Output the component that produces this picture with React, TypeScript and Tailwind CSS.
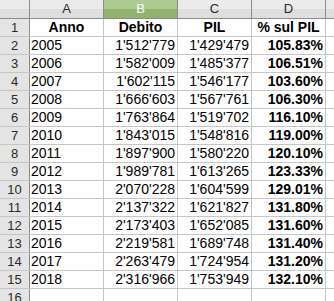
const rows = [
  ["2005", "1'512'779", "1'429'479", "105.83%"],
  ["2006", "1'582'009", "1'485'377", "106.51%"],
  ["2007", "1'602'115", "1'546'177", "103.60%"],
  ["2008", "1'666'603", "1'567'761", "106.30%"],
  ["2009", "1'763'864", "1'519'702", "116.10%"],
  ["2010", "1'843'015", "1'548'816", "119.00%"],
  ["2011", "1'897'900", "1'580'220", "120.10%"],
  ["2012", "1'989'781", "1'613'265", "123.33%"],
  ["2013", "2'070'228", "1'604'599", "129.01%"],
  ["2014", "2'137'322", "1'621'827", "131.80%"],
  ["2015", "2'173'403", "1'652'085", "131.60%"],
  ["2016", "2'219'581", "1'689'748", "131.40%"],
  ["2017", "2'263'479", "1'724'954", "131.20%"],
  ["2018", "2'316'966", "1'753'949", "132.10%"],
];

const cols = ["A", "B", "C", "D"];

function RowHead({ n }: { n: number }) {
  return (
    <div className="flex w-[30px] shrink-0 items-center justify-center border-r border-r-[#8c8c8c] bg-[#e4e4e4] text-[13px] text-[#2a2a2a]">
      {n}
    </div>
  );
}

export default function App() {
  return (
    <div className="h-[301px] w-[334px] overflow-hidden bg-white font-['Liberation_Sans',Arial,sans-serif] text-black">
      {/* column headers */}
      <div className="flex h-[19px] border-b border-[#8c8c8c]">
        <div className="w-[30px] shrink-0 border-r border-[#8c8c8c] bg-[linear-gradient(#ebebeb_50%,#dedede_50%)]" />
        {cols.map((c) => (
          <div
            key={c}
            className={
              c === "B"
                ? "flex w-[74px] shrink-0 items-center justify-center border-r border-[#8c8c8c] bg-[linear-gradient(#acc992_50%,#92b36f_50%)] text-[13px] text-white"
                : "flex w-[74px] shrink-0 items-center justify-center border-r border-[#8c8c8c] bg-[linear-gradient(#ebebeb_50%,#dedede_50%)] text-[13px] text-[#2a2a2a]"
            }
          >
            {c}
          </div>
        ))}
        <div className="flex-1 bg-[linear-gradient(#ebebeb_50%,#dedede_50%)]" />
      </div>

      {/* title row */}
      <div className="flex h-[18px] border-b border-[#c6c6c6]">
        <RowHead n={1} />
        <div className="flex w-[74px] shrink-0 items-center justify-center border-r border-[#c6c6c6] text-[14px] font-bold">Anno</div>
        <div className="flex w-[74px] shrink-0 items-center justify-center border-r border-[#c6c6c6] text-[14px] font-bold">Debito</div>
        <div className="flex w-[74px] shrink-0 items-center justify-center border-r border-[#c6c6c6] text-[14px] font-bold">PIL</div>
        <div className="flex w-[74px] shrink-0 items-center justify-center border-r border-[#c6c6c6] text-[14px] font-bold">% sul PIL</div>
        <div className="flex-1" />
      </div>

      {rows.map((r, i) => (
        <div key={r[0]} className="flex h-[18px] border-b border-[#c6c6c6]">
          <RowHead n={i + 2} />
          <div className="flex w-[74px] shrink-0 items-center border-r border-[#c6c6c6] pl-[1px] text-[14px]">{r[0]}</div>
          <div className="flex w-[74px] shrink-0 items-center justify-end border-r border-[#c6c6c6] pr-[2px] text-[14px]">{r[1]}</div>
          <div className="flex w-[74px] shrink-0 items-center justify-end border-r border-[#c6c6c6] pr-[2px] text-[14px]">{r[2]}</div>
          <div className="flex w-[74px] shrink-0 items-center justify-end border-r border-[#c6c6c6] pr-[2px] text-[14px] font-bold">{r[3]}</div>
          <div className="flex-1" />
        </div>
      ))}

      <div className="flex h-[18px] border-b border-[#c6c6c6]">
        <RowHead n={16} />
        <div className="w-[74px] shrink-0 border-r border-[#c6c6c6]" />
        <div className="w-[74px] shrink-0 border-r border-[#c6c6c6]" />
        <div className="w-[74px] shrink-0 border-r border-[#c6c6c6]" />
        <div className="w-[74px] shrink-0 border-r border-[#c6c6c6]" />
        <div className="flex-1" />
      </div>
    </div>
  );
}
